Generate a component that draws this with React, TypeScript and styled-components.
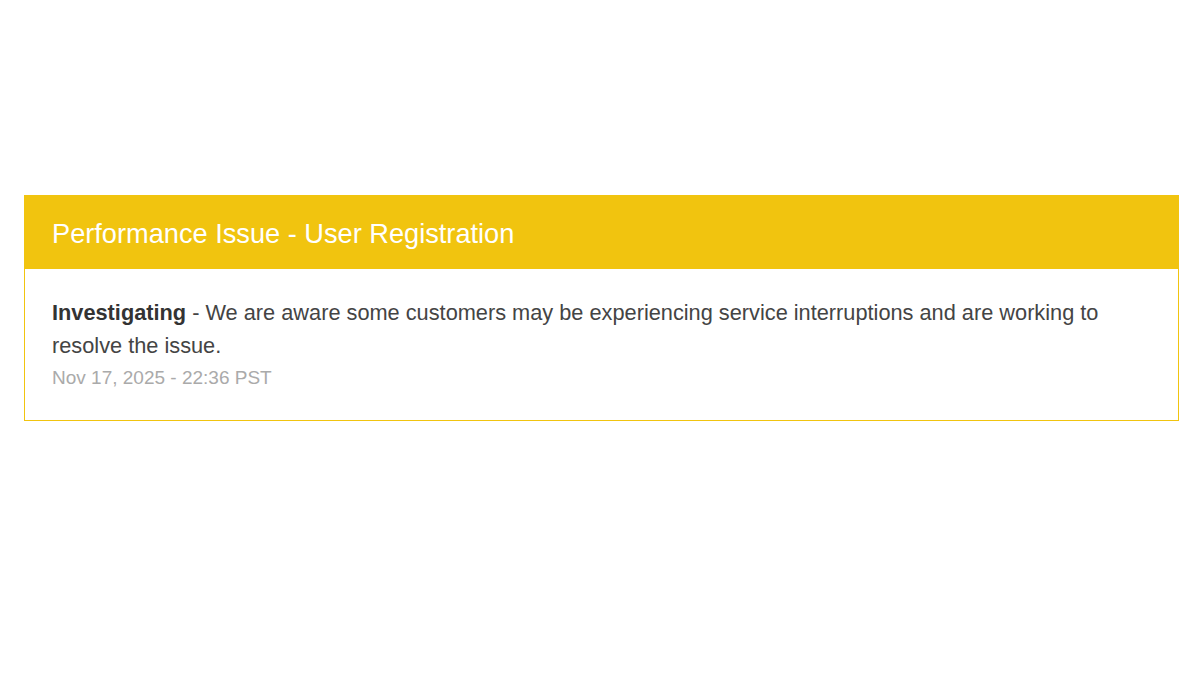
import styled, { createGlobalStyle } from "styled-components";

const GlobalStyle = createGlobalStyle`
  html, body {
    margin: 0;
    padding: 0;
    background: #ffffff;
    font-family: "Liberation Sans", Arial, sans-serif;
  }
`;

const Page = styled.div`
  padding: 195px 21px 0 24px;
`;

const IncidentCard = styled.section`
  border: 1px solid #f1c40f;
  background: #ffffff;
`;

const CardHeader = styled.header`
  background: #f1c40f;
  height: 73px;
  display: flex;
  align-items: center;
  padding: 3px 27px 0;
  box-sizing: border-box;
`;

const Title = styled.h2`
  margin: 0;
  font-size: 27.2px;
  font-weight: normal;
  color: #ffffff;
  line-height: 1;
`;

const CardBody = styled.div`
  padding: 27px 27px 26px;
`;

const Update = styled.p`
  margin: 0;
  font-size: 21.75px;
  line-height: 33px;
  color: #444444;

  strong {
    color: #333333;
  }
`;

const Timestamp = styled.div`
  font-size: 19px;
  line-height: 32px;
  color: #aaaaaa;
`;

export default function App() {
  return (
    <>
      <GlobalStyle />
      <Page>
        <IncidentCard>
          <CardHeader>
            <Title>Performance Issue - User Registration</Title>
          </CardHeader>
          <CardBody>
            <Update>
              <strong>Investigating</strong> - We are aware some customers may be
              experiencing service interruptions and are working to resolve the
              issue.
            </Update>
            <Timestamp>Nov 17, 2025 - 22:36 PST</Timestamp>
          </CardBody>
        </IncidentCard>
      </Page>
    </>
  );
}
